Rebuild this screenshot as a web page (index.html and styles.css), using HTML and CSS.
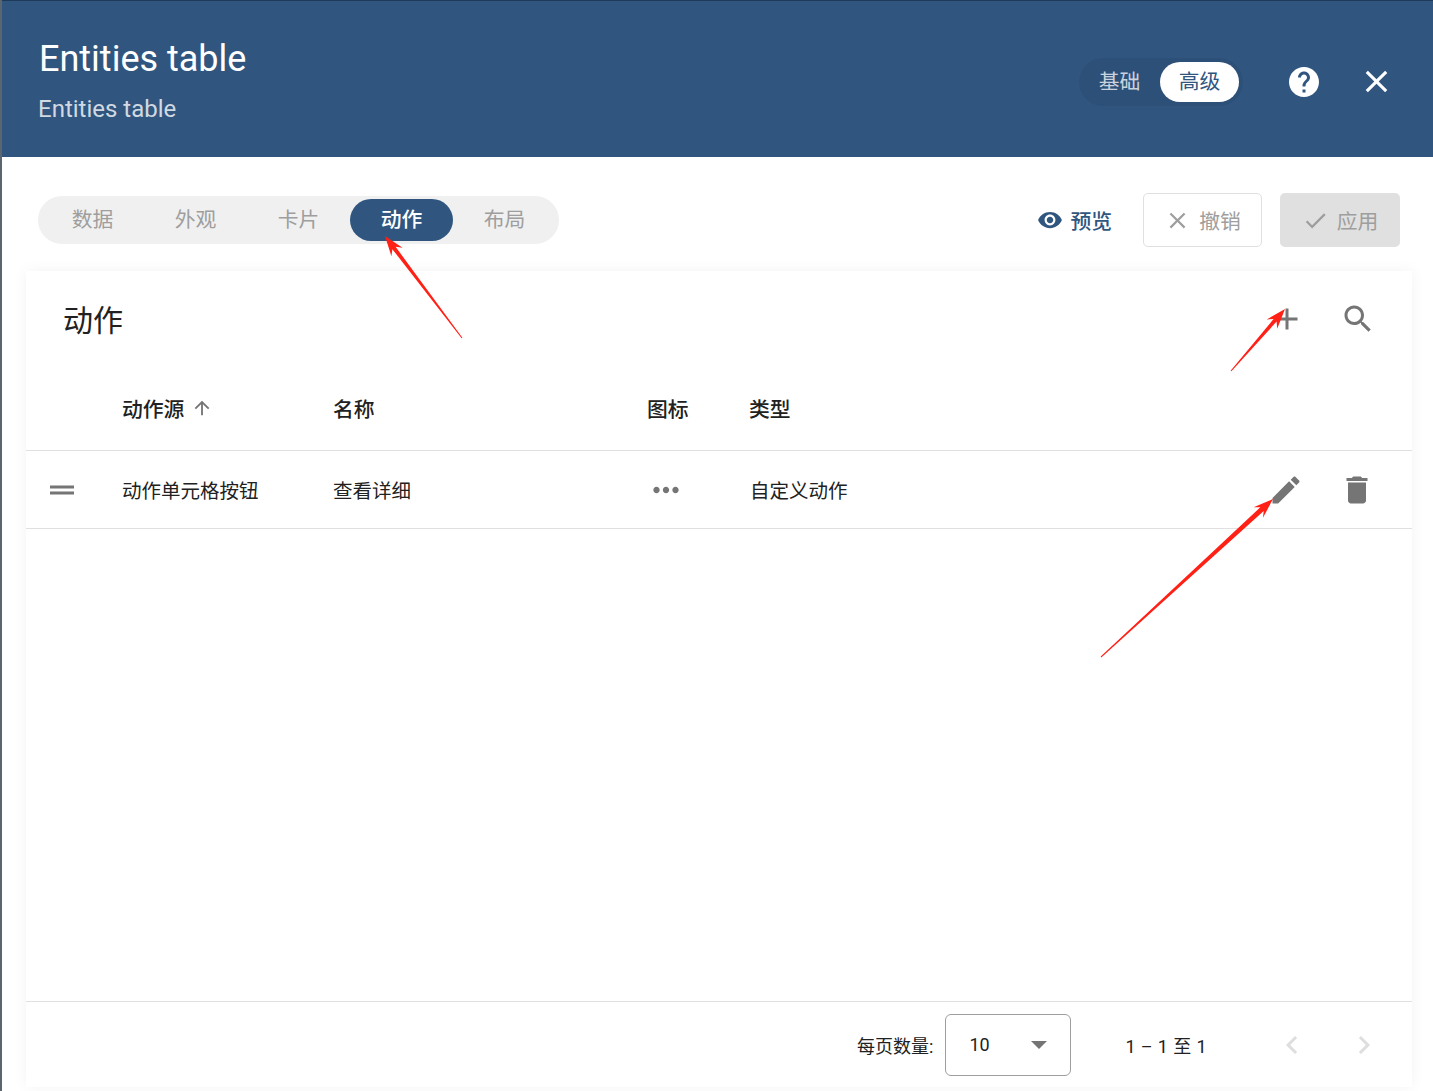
FILE: index.html
```html
<!DOCTYPE html>
<html lang="zh">
<head>
<meta charset="utf-8">
<title>Entities table</title>
<link rel="stylesheet" href="styles.css">
</head>
<body>
<div class="app">
  <header class="head">
    <div class="head-titles">
      <h1 class="title">Entities table</h1>
      <p class="subtitle">Entities table</p>
    </div>
    <div class="mode-toggle">
      <span class="mode">基础</span>
      <span class="mode mode-on">高级</span>
    </div>
    <svg class="head-help" viewBox="0 0 24 24"><path d="M12 2C6.48 2 2 6.48 2 12s4.48 10 10 10 10-4.48 10-10S17.52 2 12 2zm1 17h-2v-2h2v2zm2.07-7.75l-.9.92C13.45 12.9 13 13.5 13 15h-2v-.5c0-1.1.45-2.1 1.17-2.83l1.24-1.26c.37-.36.59-.86.59-1.41 0-1.1-.9-2-2-2s-2 .9-2 2H8c0-2.21 1.79-4 4-4s4 1.79 4 4c0 .88-.36 1.68-.93 2.25z"/></svg>
    <svg class="head-close" viewBox="0 0 24 24"><path d="M19 6.41L17.59 5 12 10.59 6.41 5 5 6.41 10.59 12 5 17.59 6.41 19 12 13.41 17.59 19 19 17.59 13.41 12z"/></svg>
  </header>

  <div class="toolbar">
    <nav class="tabs">
      <span class="tab">数据</span>
      <span class="tab">外观</span>
      <span class="tab">卡片</span>
      <span class="tab tab-on">动作</span>
      <span class="tab">布局</span>
    </nav>
    <div class="actions">
      <span class="preview">
        <svg class="preview-icon" viewBox="0 0 24 24"><path d="M12 4.5C7 4.5 2.73 7.61 1 12c1.73 4.39 6 7.5 11 7.5s9.27-3.11 11-7.5c-1.73-4.39-6-7.5-11-7.5zM12 17c-2.76 0-5-2.24-5-5s2.24-5 5-5 5 2.24 5 5-2.24 5-5 5zm0-8c-1.66 0-3 1.34-3 3s1.34 3 3 3 3-1.34 3-3-1.34-3-3-3z"/></svg>
        预览
      </span>
      <span class="btn btn-cancel">
        <svg class="btn-icon" viewBox="0 0 24 24"><path d="M19 6.41L17.59 5 12 10.59 6.41 5 5 6.41 10.59 12 5 17.59 6.41 19 12 13.41 17.59 19 19 17.59 13.41 12z"/></svg>
        撤销
      </span>
      <span class="btn btn-apply">
        <svg class="btn-icon" viewBox="0 0 24 24"><path d="M9 16.17L4.83 12l-1.42 1.41L9 19 21 7l-1.41-1.41z"/></svg>
        应用
      </span>
    </div>
  </div>

  <main class="card">
    <div class="card-head">
      <h2 class="card-title">动作</h2>
      <svg class="icon icon-add" viewBox="0 0 24 24"><path d="M19 13h-6v6h-2v-6H5v-2h6V5h2v6h6v2z"/></svg>
      <svg class="icon" viewBox="0 0 24 24"><path d="M15.5 14h-.79l-.28-.27C15.41 12.59 16 11.11 16 9.5 16 5.91 13.09 3 9.5 3S3 5.91 3 9.5 5.91 16 9.5 16c1.61 0 3.09-.59 4.23-1.57l.27.28v.79l5 4.99L20.49 19l-4.99-5zm-6 0C7.01 14 5 11.99 5 9.5S7.01 5 9.5 5 14 7.01 14 9.5 11.99 14 9.5 14z"/></svg>
    </div>

    <div class="grid-row grid-head">
      <span></span>
      <span class="sort-cell">动作源<svg class="sort-icon" viewBox="0 0 24 24"><path d="M4 12l1.41 1.41L11 7.83V20h2V7.83l5.58 5.59L20 12l-8-8-8 8z"/></svg></span>
      <span>名称</span>
      <span>图标</span>
      <span>类型</span>
      <span></span>
    </div>

    <div class="grid-row grid-body">
      <svg class="icon drag" viewBox="0 0 24 24"><path d="M20 9H4v2h16V9zM4 15h16v-2H4v2z"/></svg>
      <span>动作单元格按钮</span>
      <span>查看详细</span>
      <svg class="more" viewBox="0 0 24 24"><path d="M6 10c-1.1 0-2 .9-2 2s.9 2 2 2 2-.9 2-2-.9-2-2-2zm12 0c-1.1 0-2 .9-2 2s.9 2 2 2 2-.9 2-2-.9-2-2-2zm-6 0c-1.1 0-2 .9-2 2s.9 2 2 2 2-.9 2-2-.9-2-2-2z"/></svg>
      <span class="type-cell">自定义动作</span>
      <span class="row-actions">
        <svg class="icon" viewBox="0 0 24 24"><path d="M3 17.25V21h3.75L17.81 9.94l-3.75-3.75L3 17.25zM20.71 7.04c.39-.39.39-1.02 0-1.41l-2.34-2.34c-.39-.39-1.02-.39-1.41 0l-1.83 1.83 3.75 3.75 1.83-1.83z"/></svg>
        <svg class="icon" viewBox="0 0 24 24"><path d="M6 19c0 1.1.9 2 2 2h8c1.1 0 2-.9 2-2V7H6v12zM19 4h-3.5l-1-1h-5l-1 1H5v2h14V4z"/></svg>
      </span>
    </div>

    <div class="card-fill"></div>

    <footer class="pager">
      <span class="pager-label">每页数量:</span>
      <span class="pager-select">
        <span>10</span>
        <i class="caret"></i>
      </span>
      <span class="pager-range">1 – 1 至 1</span>
      <svg class="pager-nav" viewBox="0 0 24 24"><path d="M15.41 7.41L14 6l-6 6 6 6 1.41-1.41L10.83 12z"/></svg>
      <svg class="pager-nav" viewBox="0 0 24 24"><path d="M10 6L8.59 7.41 13.17 12l-4.58 4.59L10 18l6-6z"/></svg>
    </footer>
  </main>

  <svg class="arrows" viewBox="0 0 1433 1091">
    <polygon points="462.4,337.7 395.6,246.8 402.6,247.8 385,236 391.4,256.2 392.4,249.2 461.6,338.3"/>
    <polygon points="1231.4,371.3 1276.6,321.6 1277.2,328.7 1285,309 1266.6,319.5 1273.6,319 1230.6,370.7"/>
    <polygon points="1101.3,657.4 1263.7,510.9 1263,517.7 1273,499 1253.6,507.3 1260.3,507.3 1100.7,656.6"/>
  </svg>
</div>
</body>
</html>
```
FILE: styles.css
```css
* { box-sizing: border-box; }
html, body { height: 100%; margin: 0; }
body {
  font-family: Roboto, "Noto Sans CJK SC", sans-serif;
  color: #212121;
  background: #fff;
  overflow: hidden;
}
.app {
  position: relative;
  height: 1091px;
  display: flex;
  flex-direction: column;
  border-left: 2px solid #5c6670;
}
.head {
  flex: none;
  height: 157px;
  background: #305680;
  border-top: 1px solid #1f3a58;
  display: flex;
  align-items: flex-start;
  padding: 0 0 0 36px;
  color: #fff;
}
.head-titles { flex: 1; }
.title {
  margin: 36px 0 0 1px;
  font-size: 36px;
  line-height: 44px;
  font-weight: 400;
}
.subtitle {
  margin: 13px 0 0;
  font-size: 24px;
  line-height: 30px;
  color: rgba(255, 255, 255, .78);
}
.mode-toggle {
  margin-top: 57px;
  height: 48px;
  width: 164px;
  padding: 4px 3px 4px 0;
  border-radius: 24px;
  background: #2d5079;
  display: flex;
  align-items: center;
}
.mode {
  width: 81px;
  text-align: center;
  font-size: 20.8px;
  line-height: 40px;
  color: rgba(255, 255, 255, .75);
}
.mode-on {
  width: 79px;
  background: #fff;
  color: #305680;
  border-radius: 20px;
}
.head-help {
  width: 36px;
  height: 36px;
  margin: 63px 0 0 43px;
  fill: #fff;
}
.head-close {
  width: 37px;
  height: 37px;
  margin: 62px 38px 0 36px;
  fill: #fff;
}
.toolbar {
  flex: none;
  height: 114px;
  padding: 36px 33px 0 36px;
  display: flex;
  justify-content: space-between;
  align-items: flex-start;
}
.tabs {
  margin-top: 3px;
  width: 521px;
  height: 48px;
  padding: 3px;
  border-radius: 24px;
  background: #f0f0f0;
  display: flex;
}
.tab {
  flex: 1;
  text-align: center;
  font-size: 20.8px;
  line-height: 42px;
  color: #9e9e9e;
}
.tab-on {
  background: #305680;
  color: #fff;
  border-radius: 21px;
  font-weight: 500;
}
.actions { display: flex; align-items: center; }
.preview {
  display: flex;
  align-items: center;
  gap: 7px;
  font-size: 20.8px;
  font-weight: 500;
  color: #305680;
  margin-right: 31px;
}
.preview-icon { width: 26px; height: 26px; fill: #305680; }
.btn {
  height: 54px;
  display: flex;
  align-items: center;
  justify-content: center;
  gap: 8px;
  border-radius: 5px;
  font-size: 20.8px;
  color: #9e9e9e;
}
.btn-cancel { width: 119px; border: 1px solid #e0e0e0; margin-right: 18px; }
.btn-apply { width: 120px; background: #e0e0e0; }
.btn-icon { width: 27px; height: 27px; fill: #9e9e9e; }
.card {
  flex: 1;
  margin: 0 21px 4px 24px;
  background: #fff;
  box-shadow: 0 0 14px rgba(0, 0, 0, .05);
  display: flex;
  flex-direction: column;
}
.card-head {
  flex: none;
  height: 101px;
  padding: 30px 36px 0 37px;
  display: flex;
  align-items: flex-start;
}
.card-title {
  flex: 1;
  margin: 0;
  font-size: 30px;
  line-height: 40px;
  font-weight: 400;
}
.icon { width: 36px; height: 36px; fill: #757575; flex: none; }
.icon-add { margin-right: 35px; }
.grid-row {
  display: grid;
  grid-template-columns: 96px 211px 314px 102px 1fr 144px;
  align-items: center;
  border-bottom: 1px solid #e0e0e0;
}
.grid-head {
  flex: none;
  height: 79px;
  padding-bottom: 6px;
  font-size: 20.8px;
  font-weight: 500;
}
.sort-cell { display: flex; align-items: center; gap: 7px; }
.sort-icon { width: 22px; height: 22px; fill: #757575; }
.grid-body {
  flex: none;
  height: 78px;
  font-size: 19.5px;
}
.drag { margin-left: 18px; }
.more { width: 38px; height: 38px; fill: #757575; margin-left: 0; }
.type-cell { margin-left: 1px; }
.row-actions { display: flex; gap: 35px; }
.card-fill { flex: 1; }
.pager {
  flex: none;
  height: 86px;
  border-top: 1px solid #e0e0e0;
  display: flex;
  align-items: center;
  justify-content: flex-end;
  padding-right: 30px;
  font-size: 18px;
}
.pager-label { margin-right: 12px; }
.pager-select {
  width: 126px;
  height: 62px;
  border: 1px solid #9e9e9e;
  border-radius: 6px;
  padding: 0 23px;
  display: flex;
  align-items: center;
  justify-content: space-between;
  margin-right: 54px;
}
.caret {
  width: 0;
  height: 0;
  border-left: 8px solid transparent;
  border-right: 8px solid transparent;
  border-top: 8px solid #757575;
}
.pager-range { margin-right: 67px; letter-spacing: .4px; }
.pager-nav { width: 36px; height: 36px; fill: #dedede; margin-left: 36px; }
.pager-range + .pager-nav { margin-left: 0; }
.arrows {
  position: absolute;
  left: -2px;
  top: 0;
  width: 1433px;
  height: 1091px;
  fill: #ff2016;
  pointer-events: none;
}
```
